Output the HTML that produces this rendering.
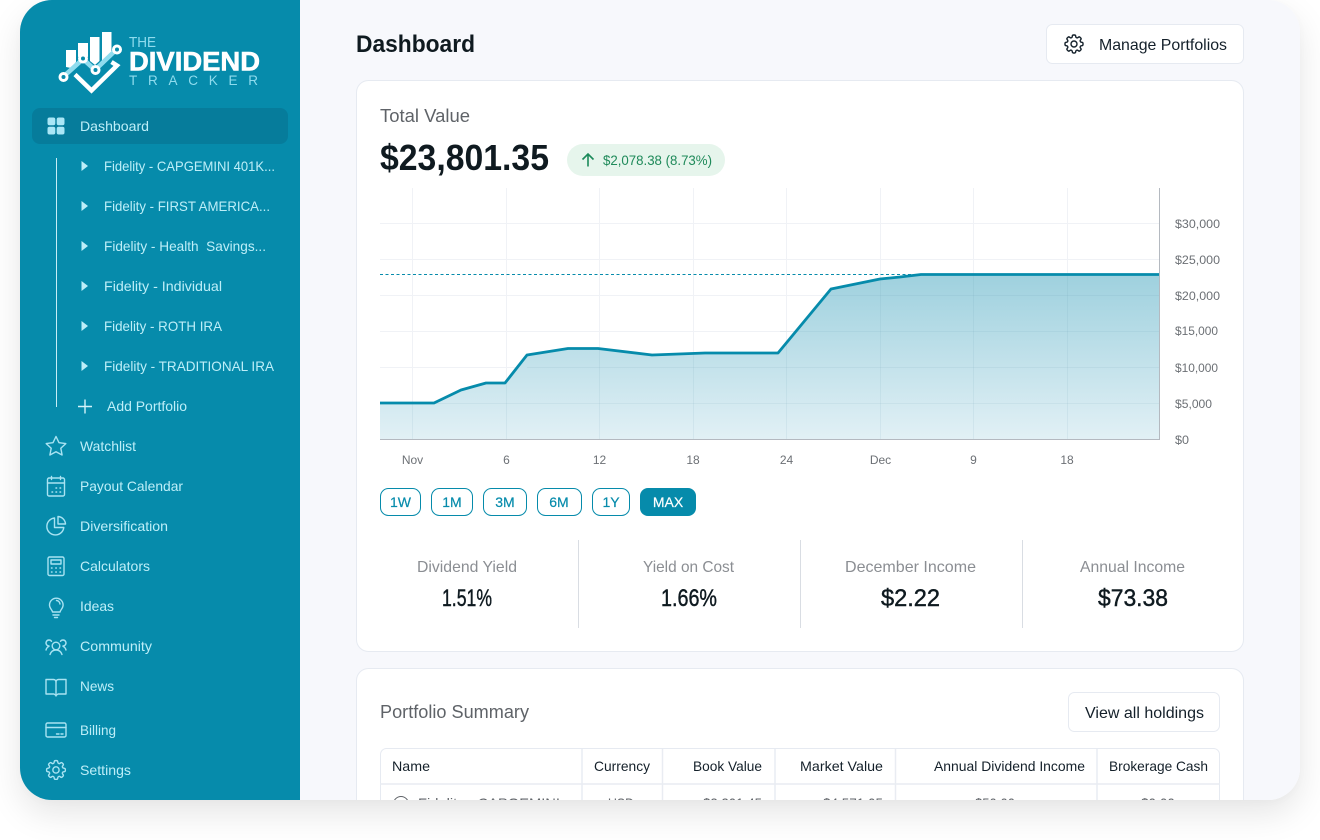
<!DOCTYPE html>
<html lang="en"><head><meta charset="utf-8"><title>The Dividend Tracker - Dashboard</title>
<style>
html,body{margin:0;padding:0;background:#fff;width:1320px;height:840px;overflow:hidden}
#s{position:absolute;left:20px;top:0;width:1280px;height:800px;border-radius:32px;box-shadow:0 14px 34px rgba(0,0,0,.10),0 2px 10px rgba(0,0,0,.02)}
svg{position:absolute;left:0;top:0;display:block}
text{font-family:"Liberation Sans",sans-serif;}
.n{font-size:14px;fill:#bdeef8}
.ic{fill:none;stroke:#a9e3f2;stroke-width:1.4;stroke-linecap:round;stroke-linejoin:round}
.ax{font-size:12px;fill:#6c7075}
.b{font-size:14px;fill:#068bab;text-anchor:middle;stroke:#068bab;stroke-width:.2}
.l{font-size:16px;fill:#8b8e93}
.v{font-size:24px;fill:#0f1a20;stroke:#0f1a20;stroke-width:.45}
.h{font-size:14px;fill:#14202a}
.g{stroke:#f0f2f6;stroke-width:1}
.r{font-size:14px;fill:#5f6368}
</style></head><body>
<div id="s"></div>
<svg width="1320" height="840" viewBox="0 0 1320 840" xmlns="http://www.w3.org/2000/svg">
<defs>
<clipPath id="fr"><rect x="20" y="0" width="1280" height="800" rx="32"/></clipPath>
<linearGradient id="ar" x1="0" y1="0" x2="0" y2="1"><stop offset="0" stop-color="#9bcfdd"/><stop offset="1" stop-color="#e1f0f5"/></linearGradient>
<path id="gear" d="M10.343 3.94c.09-.542.56-.94 1.11-.94h1.093c.55 0 1.02.398 1.11.94l.149.894c.07.424.384.764.78.93.398.164.855.142 1.205-.108l.737-.527a1.125 1.125 0 011.45.12l.773.774c.39.389.44 1.002.12 1.45l-.527.737c-.25.35-.272.806-.107 1.204.165.397.505.71.93.78l.893.15c.543.09.94.56.94 1.109v1.094c0 .55-.397 1.02-.94 1.11l-.893.149c-.425.07-.765.383-.93.78-.165.398-.143.854.107 1.204l.527.738c.32.447.269 1.06-.12 1.45l-.774.773a1.125 1.125 0 01-1.449.12l-.738-.527c-.35-.25-.806-.272-1.203-.107-.397.165-.71.505-.781.929l-.149.894c-.09.542-.56.94-1.11.94h-1.094c-.55 0-1.019-.398-1.11-.94l-.148-.894c-.071-.424-.384-.764-.781-.93-.398-.164-.854-.142-1.204.108l-.738.527c-.447.32-1.06.269-1.45-.12l-.773-.774a1.125 1.125 0 01-.12-1.45l.527-.737c.25-.35.273-.806.108-1.204-.165-.397-.505-.71-.93-.78l-.894-.15c-.542-.09-.94-.56-.94-1.11v-1.094c0-.55.398-1.019.94-1.11l.894-.149c.424-.07.765-.383.93-.78.165-.398.143-.854-.108-1.204l-.526-.738a1.125 1.125 0 01.12-1.45l.773-.773a1.125 1.125 0 011.45-.12l.737.527c.35.25.807.272 1.204.107.397-.165.71-.505.78-.929l.15-.894z M15 12a3 3 0 11-6 0 3 3 0 016 0z"/>
</defs>
<g clip-path="url(#fr)">
<rect x="300" y="0" width="1000" height="800" fill="#f7f8fc"/>
<rect x="20" y="0" width="280" height="800" fill="#068bab"/>
<!-- logo -->
<g>
<path d="M66 50h10v12l-5 6-5-1z" fill="#fff"/>
<path d="M78 43h10v14l-5-3-5 3z" fill="#fff"/>
<path d="M90 37h9.500v24l-4.500 4-5-4z" fill="#fff"/>
<path d="M102 32h9.500v25l-9.500 6z" fill="#fff"/>
<path d="M63 77L83 59 95 70 117 49" fill="none" stroke="#8fdcee" stroke-width="4.600"/>
<path d="M75 74.500L91.500 90.500 117 65.500l-5.500-3.500" fill="none" stroke="#fff" stroke-width="4.400"/>
<g fill="#068bab" stroke="#fff" stroke-width="3">
<circle cx="63.500" cy="77" r="3.500"/><circle cx="83" cy="58.500" r="3.500"/><circle cx="95.500" cy="70" r="3.500"/><circle cx="117" cy="49.500" r="3.500"/>
</g>
<text x="129" y="47" font-size="14.500" fill="#8fdcee" textLength="27" lengthAdjust="spacingAndGlyphs">THE</text>
<text x="129" y="70.500" font-size="27" font-weight="700" fill="#fff" stroke="#fff" stroke-width=".6" textLength="131" lengthAdjust="spacingAndGlyphs">DIVIDEND</text>
<text x="129" y="85" font-size="13.500" fill="#8fdcee" textLength="129" lengthAdjust="spacing">TRACKER</text>
</g>
<!-- active -->
<rect x="32" y="108" width="256" height="36" rx="8" fill="#067c9b"/>
<g fill="#a9e6f6"><rect x="47.500" y="117.500" width="7.800" height="7.800" rx="2"/><rect x="56.700" y="117.500" width="7.800" height="7.800" rx="2"/><rect x="47.500" y="126.700" width="7.800" height="7.800" rx="2"/><rect x="56.700" y="126.700" width="7.800" height="7.800" rx="2"/></g>
<text class="n" x="80" y="131" textLength="69" lengthAdjust="spacingAndGlyphs">Dashboard</text>
<line x1="56.500" y1="158" x2="56.500" y2="407" stroke="#c7edf6" stroke-width="1"/>
<g fill="#bdeef8">
<path d="M81.500 161l6.500 5-6.500 5z"/><path d="M81.500 201l6.500 5-6.500 5z"/><path d="M81.500 241l6.500 5-6.500 5z"/><path d="M81.500 281l6.500 5-6.500 5z"/><path d="M81.500 321l6.500 5-6.500 5z"/><path d="M81.500 361l6.500 5-6.500 5z"/>
</g>
<text class="n" x="104" y="171" textLength="171" lengthAdjust="spacingAndGlyphs">Fidelity - CAPGEMINI 401K...</text>
<text class="n" x="104" y="211" textLength="166" lengthAdjust="spacingAndGlyphs">Fidelity - FIRST AMERICA...</text>
<text class="n" x="104" y="251" textLength="162" lengthAdjust="spacingAndGlyphs" xml:space="preserve">Fidelity - Health  Savings...</text>
<text class="n" x="104" y="291" textLength="118" lengthAdjust="spacingAndGlyphs">Fidelity - Individual</text>
<text class="n" x="104" y="331" textLength="118" lengthAdjust="spacingAndGlyphs">Fidelity - ROTH IRA</text>
<text class="n" x="104" y="371" textLength="170" lengthAdjust="spacingAndGlyphs">Fidelity - TRADITIONAL IRA</text>
<path d="M85 399.500v14M78 406.500h14" stroke="#d4f3fa" stroke-width="1.400" fill="none"/>
<text class="n" x="107" y="411" textLength="80" lengthAdjust="spacingAndGlyphs">Add Portfolio</text>
<!-- icons -->
<path class="ic" d="M56 436.500l3 6.200 6.800.9-5 4.700 1.300 6.700-6.100-3.300-6.100 3.300 1.300-6.700-5-4.700 6.800-.9z"/>
<text class="n" x="80" y="451" textLength="56" lengthAdjust="spacingAndGlyphs">Watchlist</text>
<g class="ic"><rect x="47.500" y="478" width="17" height="18" rx="1.500"/><path d="M47.500 483h17M51.500 476.500v3M60.500 476.500v3"/><path d="M52 492h.6M56 492h.6M60 492h.6M56 488h.6M60 488h.6" stroke-width="1.500"/></g>
<text class="n" x="80" y="491" textLength="103" lengthAdjust="spacingAndGlyphs">Payout Calendar</text>
<g class="ic"><path d="M54.500 518a8.500 8.500 0 1 0 9.300 9.500h-9.300z"/><path d="M58 516.500a8 8 0 0 1 7.500 7.500H58z"/></g>
<text class="n" x="80" y="531" textLength="88" lengthAdjust="spacingAndGlyphs">Diversification</text>
<g class="ic"><rect x="48" y="557" width="16" height="18.500" rx="1.500"/><rect x="51" y="560" width="10" height="4"/><path d="M51.500 568h.5M55.800 568h.5M60 568h.5M51.500 572h.5M55.800 572h.5M60 572h.5" stroke-width="1.500"/></g>
<text class="n" x="80" y="571" textLength="70" lengthAdjust="spacingAndGlyphs">Calculators</text>
<g class="ic"><path d="M52.500 612c0-2-3-3.500-3-7a6.800 6.800 0 1 1 13.600 0c0 3.500-3 5-3 7z"/><path d="M53 615h6M54.500 617.500h3"/><path d="M56.500 600.500a4 4 0 0 1 3.500 3.500"/></g>
<text class="n" x="80" y="611" textLength="34" lengthAdjust="spacingAndGlyphs">Ideas</text>
<g class="ic"><circle cx="56" cy="646" r="3.800"/><path d="M50 654.500c1-3 3-4.500 6-4.500s5 1.500 6 4.500"/><path d="M49 646a3 3 0 1 1 2.500-4.700M46 650c.5-1.700 1.500-3 3-3.600M63 646a3 3 0 1 0-2.500-4.700M66 650c-.5-1.700-1.500-3-3-3.600"/></g>
<text class="n" x="80" y="651" textLength="72" lengthAdjust="spacingAndGlyphs">Community</text>
<g class="ic"><path d="M46 679.500h7.500c1.400 0 2.500 1 2.500 2.500 0-1.500 1.100-2.500 2.500-2.500H66v14.500h-8l-2 1.500-2-1.500h-8z"/><path d="M56 682v14"/></g>
<text class="n" x="80" y="691" textLength="34" lengthAdjust="spacingAndGlyphs">News</text>
<g class="ic"><rect x="46" y="723" width="20" height="14" rx="1.500"/><path d="M46 727.500h20M56.500 734h2.500M61 734h2"/></g>
<text class="n" x="80" y="735" textLength="36" lengthAdjust="spacingAndGlyphs">Billing</text>
<use href="#gear" class="ic" transform="translate(43.500 757.500) scale(1.040)" style="stroke-width:1.350"/>
<text class="n" x="80" y="775" textLength="51" lengthAdjust="spacingAndGlyphs">Settings</text>

<!-- header -->
<text x="356" y="52" font-size="24" font-weight="700" fill="#0f1a20" textLength="119" lengthAdjust="spacingAndGlyphs">Dashboard</text>
<rect x="1046.500" y="24.500" width="197" height="39" rx="6" fill="#fff" stroke="#e6eaf1"/>
<use href="#gear" transform="translate(1062 32)" fill="none" stroke="#14202a" stroke-width="1.400"/>
<text x="1099" y="50" font-size="16" fill="#14202a" textLength="128" lengthAdjust="spacingAndGlyphs">Manage Portfolios</text>

<!-- card 1 -->
<rect x="356.500" y="80.500" width="887" height="571" rx="12" fill="#fff" stroke="#e6eaf1"/>
<text x="380" y="122" font-size="18" fill="#5f6368" textLength="90" lengthAdjust="spacingAndGlyphs">Total Value</text>
<text x="380" y="170" font-size="36" font-weight="700" fill="#0f1a20" textLength="169" lengthAdjust="spacingAndGlyphs">$23,801.35</text>
<rect x="567" y="144" width="158" height="32" rx="16" fill="#e6f5ec"/>
<path d="M588 166.500v-12.500M582.500 159.500l5.500-5.500 5.500 5.500" fill="none" stroke="#1b8a5a" stroke-width="1.600"/>
<text x="603" y="165" font-size="14" fill="#1f8a5a" textLength="109" lengthAdjust="spacingAndGlyphs">$2,078.38 (8.73%)</text>

<!-- chart -->
<g class="g">
<line x1="380" y1="223.500" x2="1160" y2="223.500"/><line x1="380" y1="259.500" x2="1160" y2="259.500"/><line x1="380" y1="295.500" x2="1160" y2="295.500"/><line x1="380" y1="331.500" x2="1160" y2="331.500"/><line x1="380" y1="367.500" x2="1160" y2="367.500"/><line x1="380" y1="403.500" x2="1160" y2="403.500"/>
<line x1="412.500" y1="188" x2="412.500" y2="440"/><line x1="506.500" y1="188" x2="506.500" y2="440"/><line x1="599.500" y1="188" x2="599.500" y2="440"/><line x1="693.500" y1="188" x2="693.500" y2="440"/><line x1="786.500" y1="188" x2="786.500" y2="440"/><line x1="880.500" y1="188" x2="880.500" y2="440"/><line x1="973.500" y1="188" x2="973.500" y2="440"/><line x1="1067.500" y1="188" x2="1067.500" y2="440"/>
</g>
<line x1="380" y1="274.500" x2="922" y2="274.500" stroke="#068bab" stroke-width="1" stroke-dasharray="3 2.500"/>
<path d="M380 403H434L461 390 486 383H505L527 355 568 348.500H598L652 355 705 353H778L831 289 880 279 900 277 921 274.500H1159V440H380z" fill="url(#ar)" fill-opacity=".97"/>
<g stroke="#5a93a8" stroke-opacity=".09" stroke-width="1">
<line x1="380" y1="403.500" x2="1159" y2="403.500"/><line x1="527" y1="367.500" x2="1159" y2="367.500"/><line x1="780" y1="331.500" x2="1159" y2="331.500"/><line x1="825" y1="295.500" x2="1159" y2="295.500"/>
<line x1="412.500" y1="404" x2="412.500" y2="440"/><line x1="506.500" y1="383" x2="506.500" y2="440"/><line x1="599.500" y1="349" x2="599.500" y2="440"/><line x1="693.500" y1="354" x2="693.500" y2="440"/><line x1="786.500" y1="343" x2="786.500" y2="440"/><line x1="880.500" y1="279" x2="880.500" y2="440"/><line x1="973.500" y1="275" x2="973.500" y2="440"/><line x1="1067.500" y1="275" x2="1067.500" y2="440"/>
</g>
<path d="M380 403H434L461 390 486 383H505L527 355 568 348.500H598L652 355 705 353H778L831 289 880 279 900 277 921 274.500H1159" fill="none" stroke="#068bab" stroke-width="2.800" stroke-linejoin="round"/>
<path d="M380 439.500H1159.500V188" fill="none" stroke="#b4b9c0" stroke-width="1"/>
<g class="ax" text-anchor="middle">
<text x="412.500" y="464">Nov</text><text x="506.500" y="464">6</text><text x="599.500" y="464">12</text><text x="693" y="464">18</text><text x="786.500" y="464">24</text><text x="880.500" y="464">Dec</text><text x="973.500" y="464">9</text><text x="1067" y="464">18</text>
</g>
<g class="ax">
<text x="1175" y="228" textLength="45" lengthAdjust="spacingAndGlyphs">$30,000</text>
<text x="1175" y="264" textLength="45" lengthAdjust="spacingAndGlyphs">$25,000</text>
<text x="1175" y="300" textLength="45" lengthAdjust="spacingAndGlyphs">$20,000</text>
<text x="1175" y="335" textLength="43" lengthAdjust="spacingAndGlyphs">$15,000</text>
<text x="1175" y="372" textLength="43" lengthAdjust="spacingAndGlyphs">$10,000</text>
<text x="1175" y="408" textLength="37" lengthAdjust="spacingAndGlyphs">$5,000</text>
<text x="1175" y="444" textLength="14" lengthAdjust="spacingAndGlyphs">$0</text>
</g>
<!-- range buttons -->
<g fill="#fff" stroke="#068bab">
<rect x="380.500" y="488.500" width="40" height="27" rx="8"/><rect x="431.500" y="488.500" width="41" height="27" rx="8"/><rect x="483.500" y="488.500" width="43" height="27" rx="8"/><rect x="537.500" y="488.500" width="44" height="27" rx="8"/><rect x="592.500" y="488.500" width="37" height="27" rx="8"/>
</g>
<rect x="640" y="488" width="56" height="28" rx="8" fill="#068bab"/>
<text class="b" x="400.500" y="507">1W</text><text class="b" x="452" y="507">1M</text><text class="b" x="505" y="507">3M</text><text class="b" x="559" y="507">6M</text><text class="b" x="611" y="507">1Y</text>
<text class="b" x="668" y="507" style="fill:#fff;stroke:#fff">MAX</text>
<!-- stats -->
<g stroke="#d9dde3"><line x1="578.500" y1="540" x2="578.500" y2="628"/><line x1="800.500" y1="540" x2="800.500" y2="628"/><line x1="1022.500" y1="540" x2="1022.500" y2="628"/></g>
<text class="l" x="417" y="572" textLength="100" lengthAdjust="spacingAndGlyphs">Dividend Yield</text>
<text class="l" x="643" y="572" textLength="91" lengthAdjust="spacingAndGlyphs">Yield on Cost</text>
<text class="l" x="845" y="572" textLength="131" lengthAdjust="spacingAndGlyphs">December Income</text>
<text class="l" x="1080" y="572" textLength="105" lengthAdjust="spacingAndGlyphs">Annual Income</text>
<text class="v" x="442" y="606" textLength="50" lengthAdjust="spacingAndGlyphs">1.51%</text>
<text class="v" x="661" y="606" textLength="56" lengthAdjust="spacingAndGlyphs">1.66%</text>
<text class="v" x="881" y="606" textLength="59" lengthAdjust="spacingAndGlyphs">$2.22</text>
<text class="v" x="1098" y="606" textLength="70" lengthAdjust="spacingAndGlyphs">$73.38</text>

<!-- card 2 -->
<rect x="356.500" y="668.500" width="887" height="180" rx="12" fill="#fff" stroke="#e6eaf1"/>
<text x="380" y="718" font-size="18" fill="#5f6368" textLength="149" lengthAdjust="spacingAndGlyphs">Portfolio Summary</text>
<rect x="1068.500" y="692.500" width="151" height="39" rx="6" fill="#fff" stroke="#e6eaf1"/>
<text x="1085" y="718" font-size="16" fill="#14202a" textLength="119" lengthAdjust="spacingAndGlyphs">View all holdings</text>
<rect x="380.500" y="748.500" width="839" height="90" rx="6" fill="#fff" stroke="#e6eaf1"/>
<g stroke="#e9ecf2" stroke-width="1.500"><line x1="380" y1="784" x2="1220" y2="784"/><line x1="582" y1="749" x2="582" y2="800"/><line x1="662.500" y1="749" x2="662.500" y2="800"/><line x1="775" y1="749" x2="775" y2="800"/><line x1="895.500" y1="749" x2="895.500" y2="800"/><line x1="1097" y1="749" x2="1097" y2="800"/></g>
<text class="h" x="392" y="771" textLength="38" lengthAdjust="spacingAndGlyphs">Name</text>
<text class="h" x="594" y="771" textLength="56" lengthAdjust="spacingAndGlyphs">Currency</text>
<text class="h" x="693" y="771" textLength="69" lengthAdjust="spacingAndGlyphs">Book Value</text>
<text class="h" x="800" y="771" textLength="83" lengthAdjust="spacingAndGlyphs">Market Value</text>
<text class="h" x="934" y="771" textLength="151" lengthAdjust="spacingAndGlyphs">Annual Dividend Income</text>
<text class="h" x="1109" y="771" textLength="99" lengthAdjust="spacingAndGlyphs">Brokerage Cash</text>
<circle cx="401" cy="804" r="7.500" fill="none" stroke="#5f6368"/>
<text class="r" x="418" y="808" textLength="142" lengthAdjust="spacingAndGlyphs">Fidelity - CAPGEMINI</text>
<text class="r" x="608" y="808" textLength="26" lengthAdjust="spacingAndGlyphs">USD</text>
<text class="r" x="703" y="808" textLength="59" lengthAdjust="spacingAndGlyphs">$3,201.45</text>
<text class="r" x="823" y="808" textLength="60" lengthAdjust="spacingAndGlyphs">$4,571.05</text>
<text class="r" x="975" y="808" textLength="40" lengthAdjust="spacingAndGlyphs">$50.00</text>
<text class="r" x="1141" y="808" textLength="34" lengthAdjust="spacingAndGlyphs">$0.00</text>
</g>
</svg>
</body></html>
